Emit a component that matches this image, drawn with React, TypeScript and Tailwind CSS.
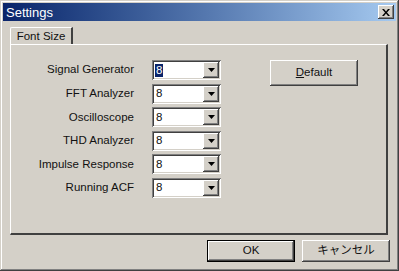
import React from 'react';

const raised =
  'shadow-[inset_-1px_-1px_#404040,inset_1px_1px_#ffffff,inset_-2px_-2px_#808080,inset_2px_2px_#d4d0c8]';
const sunken =
  'shadow-[inset_1px_1px_#808080,inset_-1px_-1px_#ffffff,inset_2px_2px_#404040,inset_-2px_-2px_#d4d0c8]';

const rows = ['Signal Generator', 'FFT Analyzer', 'Oscilloscope', 'THD Analyzer', 'Impulse Response', 'Running ACF'];

const Combo = ({ first }: { first?: boolean }) => (
  <div className={`w-[69px] h-[20px] bg-white flex items-center p-[2px] ${sunken}`}>
    <div className="flex-grow h-full flex items-center pl-[1px]">
      <span className={first ? 'bg-[#0a246a] text-white leading-[13px] px-[1px]' : 'leading-[13px] px-[1px]'}>8</span>
    </div>
    <div className={`w-[16px] h-full bg-[#d4d0c8] flex items-center justify-center ${raised}`}>
      <svg width="7" height="4" viewBox="0 0 7 4">
        <path d="M0 0h7L3.5 4z" fill="#000" />
      </svg>
    </div>
  </div>
);

const App = () => {
  return (
    <div
      className="w-[399px] h-[271px] bg-[#d4d0c8] flex flex-col p-[3px] text-[11.5px] text-[#111] shadow-[inset_-1px_-1px_#404040,inset_1px_1px_#d4d0c8,inset_-2px_-2px_#808080,inset_2px_2px_#ffffff]"
      style={{ fontFamily: '"Liberation Sans", "Noto Sans CJK JP", sans-serif' }}
    >
      <div className="h-[18px] flex items-center bg-gradient-to-r from-[#0a246a] to-[#a6caf0] pl-[3px] pr-[2px] flex-shrink-0">
        <div className="flex-grow text-white text-[13px] leading-none">Settings</div>
        <div className={`w-[16px] h-[14px] bg-[#d4d0c8] flex items-center justify-center ${raised}`}>
          <svg width="8" height="7" viewBox="0 0 8 7">
            <path d="M0 0h2l2 2.5L6 0h2L5 3.5 8 7H6L4 4.5 2 7H0l3-3.5z" fill="#000" />
          </svg>
        </div>
      </div>

      <div className="mt-[6px] ml-[7px] mr-[8px] flex flex-col">
        <div className="flex">
          <div className="w-[63px] h-[18px] border-t border-l border-white border-r-2 border-r-[#404040] rounded-tl-[2px] flex items-center justify-center">
            Font Size
          </div>
        </div>
        <div className="h-[191px] border-l border-t border-white border-r-2 border-b-2 border-r-[#404040] border-b-[#404040] -mt-[1px] flex pt-[15px]">
          <div className="flex flex-col gap-[3.6px] w-[211px]">
            {rows.map((r, i) => (
              <div key={r} className="flex items-center h-[20px]">
                <div className="w-[123px] text-right">{r}</div>
                <div className="ml-[18px]">
                  <Combo first={i === 0} />
                </div>
              </div>
            ))}
          </div>
          <div className="ml-[48px]">
            <div className={`w-[88px] h-[26px] flex items-center justify-center ${raised}`}>
              <span>
                <span className="underline">D</span>efault
              </span>
            </div>
          </div>
        </div>
      </div>

      <div className="flex justify-end gap-[7px] mt-[5px] mr-[6px]">
        <div className="w-[88px] h-[22px] border border-black flex items-center justify-center">
          <div className={`w-full h-full flex items-center justify-center ${raised}`}>OK</div>
        </div>
        <div className={`w-[88px] h-[22px] flex items-center justify-center ${raised}`}>キャンセル</div>
      </div>
    </div>
  );
};

export default App;
